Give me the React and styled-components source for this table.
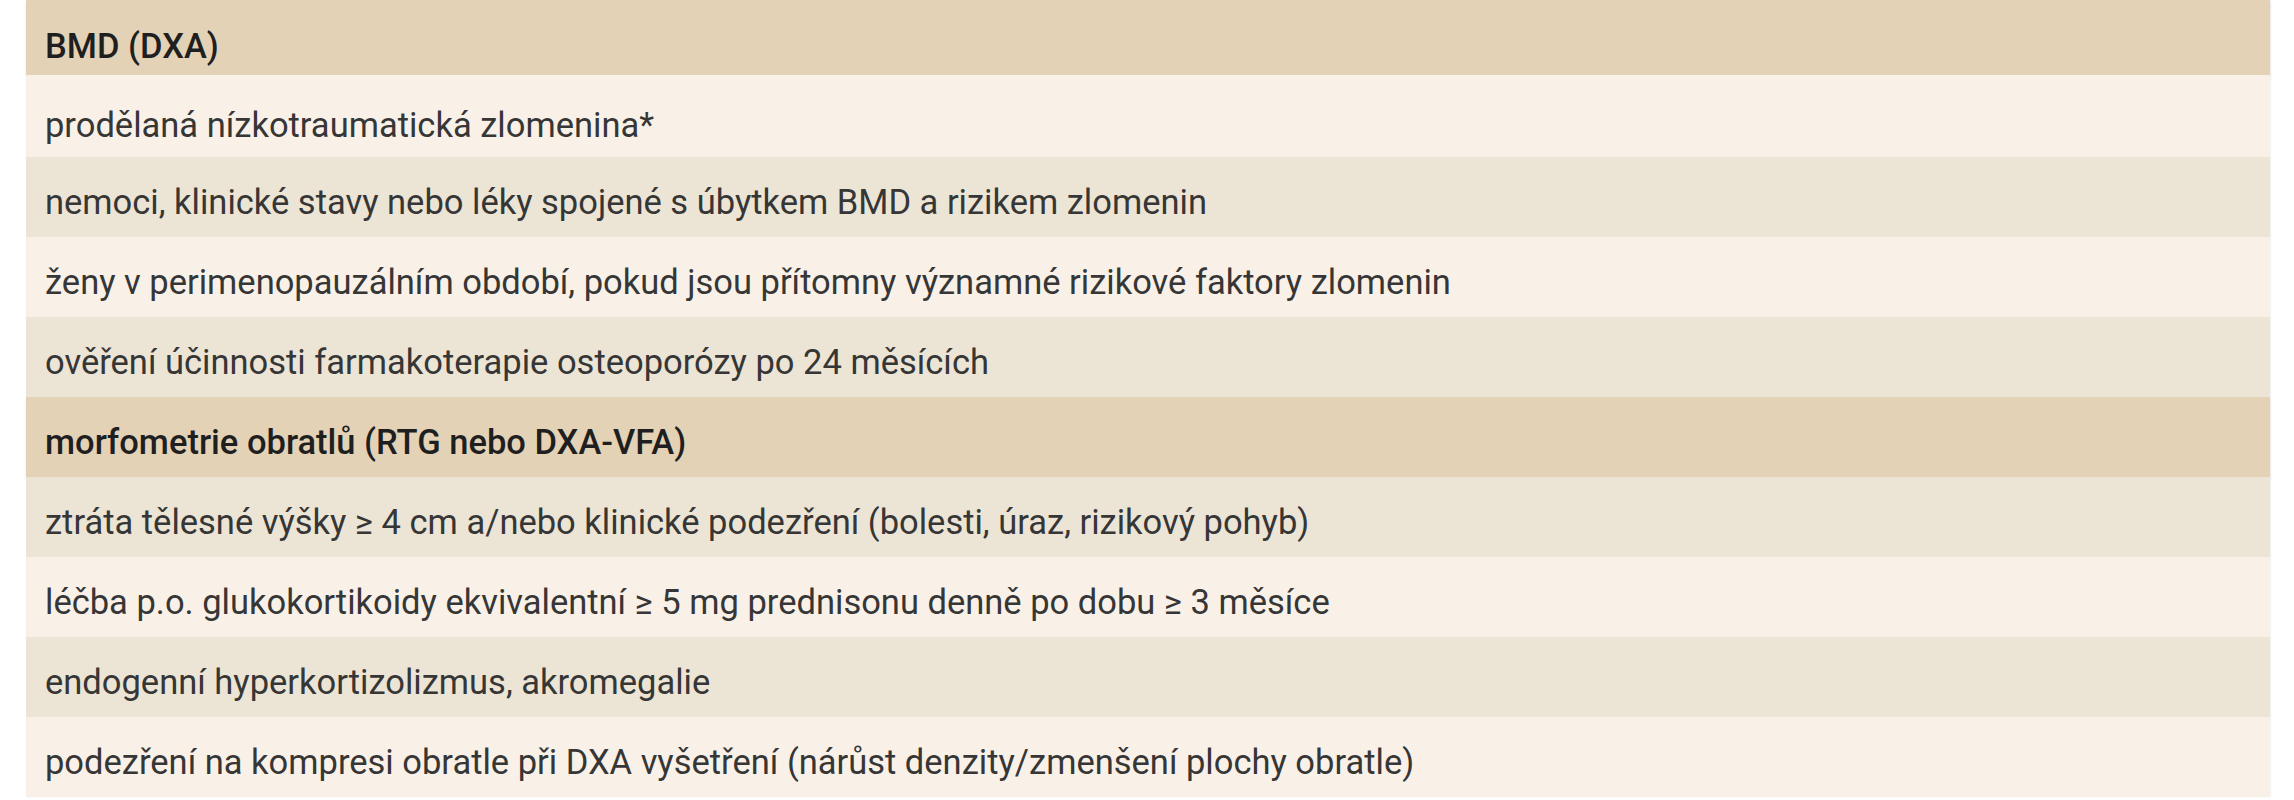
import React from 'react';
import styled, { createGlobalStyle } from 'styled-components';

const GlobalStyle = createGlobalStyle`
  html, body {
    margin: 0;
    padding: 0;
    background: #ffffff;
  }
  body {
    font-family: Roboto, "Noto Sans", "Liberation Sans", sans-serif;
  }
`;

const Page = styled.div`
  width: 2294px;
  height: 800px;
  box-sizing: border-box;
  padding: 0 24px 0 26px;
  overflow: hidden;
`;

const Table = styled.table`
  width: 100%;
  border-collapse: collapse;
  box-shadow: 1px 0 2px rgba(0, 0, 0, 0.06);
`;

const Row = styled.tr`
  background-color: #f9f1e8;

  &:nth-child(odd) {
    background-color: #ece5d5;
  }
`;

const Cell = styled.td`
  height: ${({ $tall }) => ($tall ? '82px' : '80px')};
  padding: ${({ $tall }) => ($tall ? '18px' : '10px')} 19px 0;
  box-sizing: border-box;
  font-size: 34.5px;
  font-weight: 400;
  color: #363636;
  white-space: nowrap;
`;

const HeadRow = styled.tr`
  background-color: #e3d2b6;
  box-shadow: 0 2px 2px rgba(120, 100, 70, 0.12);
`;

const HeadCell = styled(Cell)`
  height: ${({ $first }) => ($first ? '75px' : '80px')};
  padding-top: ${({ $first }) => ($first ? '16px' : '10px')};
  font-weight: 500;
  color: #1f1f1f;
`;

const sections = [
  {
    title: 'BMD (DXA)',
    items: [
      'prodělaná nízkotraumatická zlomenina*',
      'nemoci, klinické stavy nebo léky spojené s úbytkem BMD a rizikem zlomenin',
      'ženy v perimenopauzálním období, pokud jsou přítomny významné rizikové faktory zlomenin',
      'ověření účinnosti farmakoterapie osteoporózy po 24 měsících',
    ],
  },
  {
    title: 'morfometrie obratlů (RTG nebo DXA-VFA)',
    items: [
      'ztráta tělesné výšky ≥ 4 cm a/nebo klinické podezření (bolesti, úraz, rizikový pohyb)',
      'léčba p.o. glukokortikoidy ekvivalentní ≥ 5 mg prednisonu denně po dobu ≥ 3 měsíce',
      'endogenní hyperkortizolizmus, akromegalie',
      'podezření na kompresi obratle při DXA vyšetření (nárůst denzity/zmenšení plochy obratle)',
    ],
  },
];

function App() {
  const rows = [];
  sections.forEach((section, i) => {
    rows.push(
      <HeadRow key={section.title}>
        <HeadCell $first={i === 0}>{section.title}</HeadCell>
      </HeadRow>
    );
    section.items.forEach((item, j) => {
      rows.push(
        <Row key={item}>
          <Cell $tall={i === 0 && j === 0}>{item}</Cell>
        </Row>
      );
    });
  });

  return (
    <>
      <GlobalStyle />
      <Page>
        <Table>
          <tbody>{rows}</tbody>
        </Table>
      </Page>
    </>
  );
}

export default App;
